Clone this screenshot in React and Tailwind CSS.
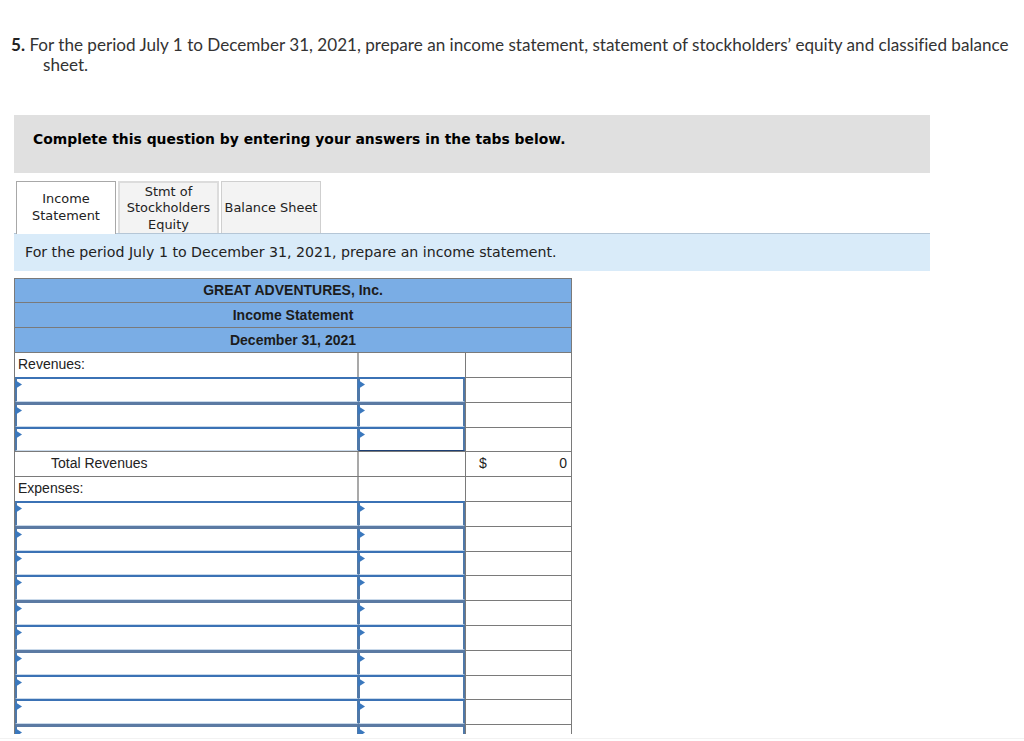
const rows = [
  { label: "Revenues:" },
  { input: true }, { input: true, heavy: true }, { input: true, last: true },
  { label: "Total Revenues", indent: true, dollar: true, value: "0" },
  { label: "Expenses:" },
  { input: true }, { input: true, heavy: true }, { input: true }, { input: true }, { input: true, heavy: true },
  { input: true }, { input: true, heavy: true }, { input: true }, { input: true }, { input: true, heavy: true },
]

function Flag() {
  return (
    <svg className="absolute -left-[2px] top-[1px]" width="7" height="9" viewBox="0 0 7 9">
      <path d="M0 0 L7 4.5 L0 9 Z" fill="#3b78bd" />
    </svg>
  )
}

function InputCell({ className, row }) {
  return (
    <div
      className={`relative -mt-px border-b border-l-2 border-r-2 border-l-[#4f78a8] border-r-[#4f78a8] bg-white ${
        row.heavy ? "border-t-[3px] border-t-[#5b7aa3]" : "border-t-2 border-t-[#3b72b5]"
      } ${row.dark ? "border-b-[#1d3f73]" : "border-b-[#c9d9ea]"} ${className}`}
    >
      <Flag />
    </div>
  )
}

function TitleRow({ children, first }) {
  return (
    <div className={`flex items-center justify-center border-b border-[#7a7a7a] bg-[#7aade5] text-[14px] font-bold text-[#1c1c1c] ${first ? "h-[24.45px]" : "h-[24.82px]"}`}>
      {children}
    </div>
  )
}

function Row({ row }) {
  return (
    <div className="flex h-[24.82px] border-b border-[#7a7a7a] font-['Liberation_Sans',sans-serif] text-[14px] text-[#222]">
      {row.input ? (
        <InputCell className="w-[344px]" row={row} />
      ) : (
        <div className={`flex w-[344px] items-center border-r-2 border-[#a9a9a9] pb-px ${row.indent ? "pl-[36px]" : "pl-[3px]"}`}>
          {row.label}
        </div>
      )}
      {row.input ? (
        <InputCell className="-ml-px w-[107px]" row={{ ...row, dark: row.last }} />
      ) : (
        <div className="w-[106px]" />
      )}
      <div className="flex flex-1 items-center justify-between border-l border-[#7a7a7a] pb-px pl-[13px] pr-[4px]">
        <span>{row.dollar ? "$" : ""}</span>
        <span>{row.value}</span>
      </div>
    </div>
  )
}

export default function App() {
  return (
    <div className="h-[741px] overflow-hidden bg-white font-['Lato',sans-serif]">
      <div className="h-[739px] overflow-hidden border-b border-[#f2f2f2]">
        <p className="pl-[43px] pr-[8px] pt-[35px] text-[17.12px] leading-[20px] -indent-[32px] text-[#333] [font-variant-ligatures:none]">
          <b className="text-[#222]">5.</b> For the period July 1 to December 31, 2021, prepare an income statement, statement of stockholders’ equity and classified balance sheet.
        </p>
        <div className="ml-[14px] mt-[40px] w-[916px]">
          <div className="flex h-[58px] items-center bg-[#e0e0e0] pb-[10px] pl-[19px] font-['DejaVu_Sans',sans-serif] text-[13.9px] font-bold text-black">
            Complete this question by entering your answers in the tabs below.
          </div>
          <div className="relative mt-[8px] flex h-[52px] items-end gap-[2px] pl-[2px] font-['DejaVu_Sans',sans-serif] text-[12.9px] leading-[16.5px] text-[#222]">
            <div className="-mb-px flex h-[53px] w-[100px] items-center justify-center border border-b-0 border-[#a8a8a8] bg-white pb-px text-center">
              Income<br />Statement
            </div>
            <div className="flex h-[52px] w-[101px] items-center justify-center border-2 border-b-0 border-[#dcdcdc] bg-[#f3f3f3] pt-px text-center">
              Stmt of<br />Stockholders<br />Equity
            </div>
            <div className="flex h-[52px] w-[100px] items-center justify-center border border-b-0 border-[#cfcfcf] bg-[#f3f3f3] pt-px text-center">
              Balance Sheet
            </div>
          </div>
          <div className="flex h-[38px] items-center border-t border-[#b5c6d6] bg-[#d9ebf9] pl-[11px] font-['DejaVu_Sans',sans-serif] text-[14.16px] text-[#222]">
            For the period July 1 to December 31, 2021, prepare an income statement.
          </div>
          <div className="mt-[7px] h-[456px] w-[558px] overflow-hidden border-x border-t border-[#7a7a7a] font-['Liberation_Sans',sans-serif]">
            <TitleRow first>GREAT ADVENTURES, Inc.</TitleRow>
            <TitleRow>Income Statement</TitleRow>
            <TitleRow>December 31, 2021</TitleRow>
            {rows.map((row, i) => (
              <Row key={i} row={row} />
            ))}
          </div>
        </div>
      </div>
    </div>
  )
}
